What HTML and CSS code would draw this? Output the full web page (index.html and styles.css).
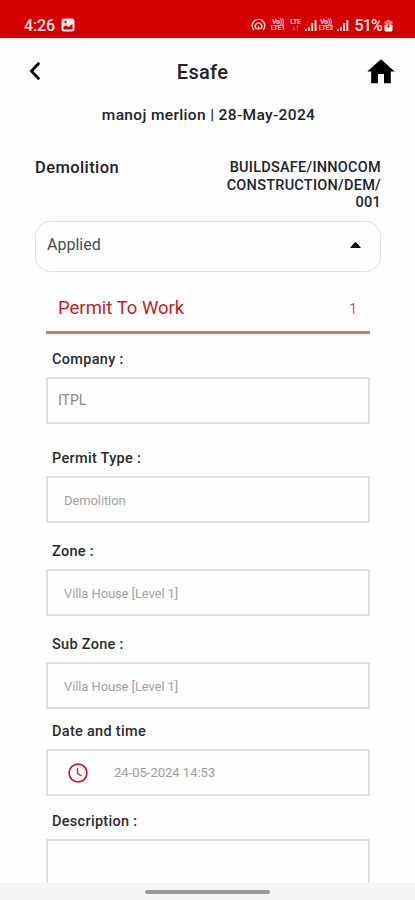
FILE: index.html
```html
<!DOCTYPE html>
<html lang="en">
<head>
<meta charset="utf-8">
<meta name="viewport" content="width=device-width, initial-scale=1">
<title>Esafe</title>
<link rel="stylesheet" href="styles.css">
</head>
<body>
<div class="screen">
  <div class="status">
    <span class="clock">4:26</span>
    <svg class="picture" width="14" height="14" viewBox="0 0 14 14"><rect x=".5" y=".5" width="13" height="13" rx="2.500" fill="#ffeaea"/><path d="M2.500 8.500l2.500-1 2.500 1.500 4-3v4.500q0 1-1 1h-7q-1 0-1-1z" fill="#d40000"/><circle cx="4.500" cy="4" r="1.200" fill="#d40000"/></svg>
    <div class="signals">
      <svg width="15" height="14" viewBox="0 0 15 14" fill="none" stroke="#ffdede" stroke-width="1.400" stroke-linecap="round"><path d="M2.500 11.500a6.300 6.300 0 1 1 10 0M5 10.500a3.300 3.300 0 1 1 5 0"/><path d="M7.500 7l-1.500 4.500h3z" fill="#ffdede" stroke="none"/></svg>
      <span class="net volte1"><b>Vo))</b><b>LTE1</b></span>
      <span class="net lte"><b>LTE</b><b>↓↑</b></span>
      <svg class="bars1" width="12" height="12" viewBox="0 0 12 12" fill="#ffdede"><path d="M0 10h1.800v2H0zM3 8h1.800v4H3zM6.300 4h1.900v8H6.300zM9.600 1h2v11h-2z"/></svg>
      <span class="net volte2"><b>Vo))</b><b>LTE2</b></span>
      <svg class="bars2" width="12" height="12" viewBox="0 0 12 12" fill="#ffdede"><path d="M0 10h1.800v2H0zM3 8h1.800v4H3zM6 4h2v8H6zM9.300 1h2v11h-2z"/></svg>
      <span class="percent">51%</span>
      <svg width="9" height="13" viewBox="0 0 9 13"><path d="M3 1h3v1.500H3z" fill="#ff9d9d"/><rect x=".5" y="2" width="8" height="4" rx="1" fill="#ee7777"/><path d="M.5 6h8v5q0 1.500-1.500 1.500H2Q.5 12.500.5 11z" fill="#fff"/><path d="M4.800 4.500L3 8h1.400L4.200 10 6 7H4.700z" fill="#d40000"/></svg>
    </div>
  </div>

  <header class="appbar">
    <svg class="back" width="12" height="20" viewBox="0 0 12 20" fill="none" stroke="#050505" stroke-width="2.800"><path d="M10.300 1.800L2.400 10l7.900 8.200"/></svg>
    <h1>Esafe</h1>
    <svg class="home" width="28" height="25" viewBox="0 0 28 25"><path d="M14 .3L27.700 12.500H23.800V24.300H17V15H11v9.300H4.200V12.500H.3z" fill="#000"/></svg>
  </header>
  <p class="who">manoj merlion | 28-May-2024</p>

  <section class="summary">
    <h2>Demolition</h2>
    <p class="ref">BUILDSAFE/INNOCOM<br>CONSTRUCTION/DEM/<br>001</p>
  </section>
  <div class="select"><span>Applied</span><svg width="11" height="6" viewBox="0 0 11 6"><path d="M0 6L4.200 1Q5.500-.3 6.800 1L11 6z" fill="#000"/></svg></div>

  <main class="form">
    <div class="tab"><span class="tab-name">Permit To Work</span><span class="tab-num">1</span></div>
    <div class="field company"><label>Company :</label><div class="box">ITPL</div></div>
    <div class="field type"><label>Permit Type :</label><div class="box inset">Demolition</div></div>
    <div class="field zone"><label>Zone :</label><div class="box inset">Villa House [Level 1]</div></div>
    <div class="field subzone"><label>Sub Zone :</label><div class="box inset">Villa House [Level 1]</div></div>
    <div class="field date"><label>Date and time</label><div class="box"><svg width="20" height="20" viewBox="0 0 20 20" fill="none" stroke="#cc1a1e" stroke-width="1.700"><circle cx="10" cy="10" r="8.900"/><path d="M9.500 5v5.500l4 2.500" stroke-width="1.300"/></svg><span>24-05-2024 14:53</span></div></div>
    <div class="field description"><label>Description :</label><div class="box"></div></div>
  </main>

  <footer class="navbar"><div class="handle"></div></footer>
</div>
</body>
</html>
```
FILE: styles.css
```css
* { box-sizing: border-box; }
body { margin: 0; background: #fefefe; font-family: Roboto, "Liberation Sans", sans-serif; color: #20222b; }
h1, h2, p { margin: 0; font-weight: 500; }
svg { display: block; flex: none; }
.screen { width: 415px; height: 900px; display: flex; flex-direction: column; overflow: hidden; }

.status { flex: none; height: 38px; padding: 12px 22px 0 24px; display: flex; align-items: center; background: #d40000; color: #ffe5e5; }
.clock { width: 37px; font-size: 16px; font-weight: 500; letter-spacing: -0.1px; }
.signals { margin-left: auto; display: flex; align-items: center; }
.net { display: flex; flex-direction: column; align-items: center; margin-left: 4px; width: 15px; font-size: 7px; line-height: 6.5px; color: #ffdede; }
.net b { font-weight: 700; letter-spacing: -0.3px; white-space: nowrap; }
.net.lte { margin-left: 3px; width: 14px; }
.bars1 { margin-left: 3px; }
.net.volte2 { margin-left: 1px; }
.bars2 { margin-left: 4px; }
.percent { margin: 0 2px 0 5px; font-size: 16px; font-weight: 500; letter-spacing: -0.8px; }

.appbar { flex: none; height: 66px; padding: 0 20px 0 29px; display: grid; grid-template-columns: 28px 1fr 28px; align-items: center; }
.appbar h1 { font-size: 20px; line-height: 24px; letter-spacing: 0.3px; text-align: center; padding: 2px 19px 0 0; }
.home { justify-self: end; }
.who { flex: none; height: 22px; line-height: 23px; font-size: 15.5px; letter-spacing: 0.35px; text-align: center; padding-left: 2px; }

.summary { flex: none; height: 95px; padding: 32px 34px 0 35px; display: flex; justify-content: space-between; }
.summary h2 { font-size: 16.5px; line-height: 19px; letter-spacing: 0.4px; }
.ref { padding-top: 1px; font-size: 14.5px; line-height: 17.6px; letter-spacing: 0.25px; text-align: right; font-weight: 500; }
.select { flex: none; height: 51px; margin: 0 34px 0 35px; padding: 0 19px 4px 11px; border: 1.5px solid #dfdfdf; border-radius: 15px; display: flex; align-items: center; justify-content: space-between; font-size: 16px; color: #4a4d55; }

.form { flex: 1; min-height: 0; overflow: hidden; padding: 0 45px 0 46px; }
.tab { height: 62px; padding: 13px 13px 0 12px; border-bottom: 3px solid #cf7477; display: flex; align-items: center; justify-content: space-between; color: #c91c22; }
.tab-name { font-size: 18.5px; }
.tab-num { padding-top: 2px; font-size: 14px; color: #cc5565; }
.field label { display: block; height: 20px; margin: 0 0 8px 6px; line-height: 22px; font-size: 14.5px; font-weight: 500; letter-spacing: 0.3px; color: #2b2b2b; }
.box { height: 47px; padding: 0 0 1px 10px; border: 2px solid #dfdfdf; display: flex; align-items: center; font-size: 14px; color: #888; }
.inset { padding: 1px 0 0 16px; font-size: 13px; letter-spacing: -0.1px; color: #a2a2a2; }
.company { padding-top: 15px; }
.type { padding-top: 24px; }
.zone { padding-top: 18px; }
.subzone { padding-top: 18px; }
.date { padding-top: 12px; }
.date .box { padding: 0 0 0 20px; gap: 26px; font-size: 13px; color: #9d9d9d; }
.description { padding-top: 15px; }
.description .box { height: 90px; }

.navbar { flex: none; height: 17px; display: flex; justify-content: center; background: #f5f5f8; }
.handle { width: 125px; height: 4px; margin-top: 7px; border-radius: 2px; background: #98989b; }
```
